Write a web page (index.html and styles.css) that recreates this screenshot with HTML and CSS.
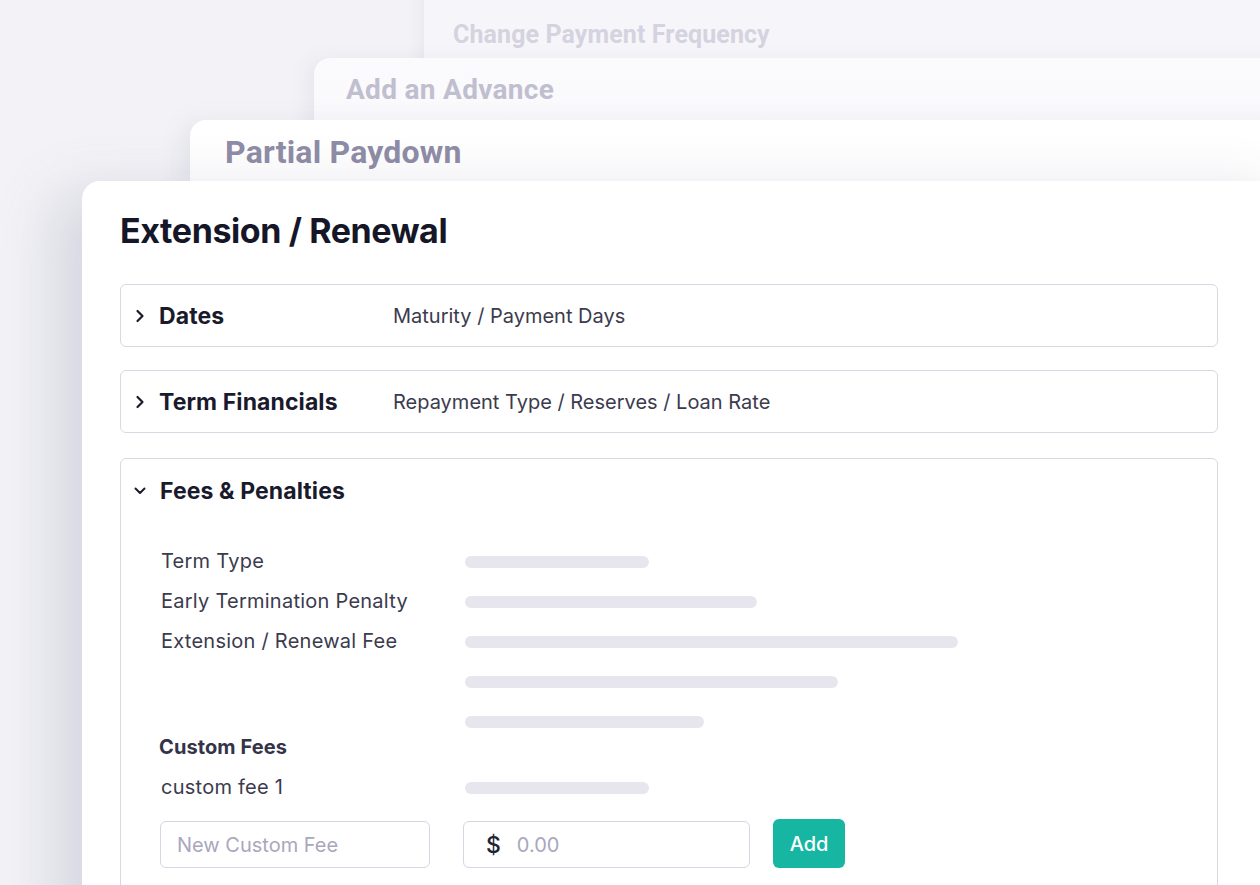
FILE: index.html
```html
<!DOCTYPE html>
<html lang="en">
<head>
<meta charset="utf-8">
<title>Extension / Renewal</title>
<link rel="stylesheet" href="styles.css">
</head>
<body>
<div class="stage">
  <div class="back-card back-1"><span class="back-title">Change Payment Frequency</span></div>
  <div class="back-card back-2"><span class="back-title">Add an Advance</span></div>
  <div class="back-card back-3"><span class="back-title">Partial Paydown</span></div>

  <main class="card">
    <h1 class="title">Extension / Renewal</h1>

    <section class="acc">
      <div class="acc-head">
        <svg class="chev" viewBox="0 0 10 14" width="10" height="14"><path d="M2.5 2 L7.5 7 L2.5 12" fill="none" stroke="#1b1b2c" stroke-width="2.2" stroke-linecap="round" stroke-linejoin="round"/></svg>
        <span class="acc-label">Dates</span>
        <span class="acc-sub">Maturity / Payment Days</span>
      </div>
    </section>

    <section class="acc">
      <div class="acc-head">
        <svg class="chev" viewBox="0 0 10 14" width="10" height="14"><path d="M2.5 2 L7.5 7 L2.5 12" fill="none" stroke="#1b1b2c" stroke-width="2.2" stroke-linecap="round" stroke-linejoin="round"/></svg>
        <span class="acc-label">Term Financials</span>
        <span class="acc-sub">Repayment Type / Reserves / Loan Rate</span>
      </div>
    </section>

    <section class="acc acc-open">
      <div class="acc-head">
        <svg class="chev chev-down" viewBox="0 0 14 10" width="14" height="10"><path d="M2.5 2.5 L7 7 L11.5 2.5" fill="none" stroke="#1b1b2c" stroke-width="2" stroke-linecap="round" stroke-linejoin="round"/></svg>
        <span class="acc-label">Fees &amp; Penalties</span>
      </div>
      <div class="acc-body">
        <div class="row"><span class="row-label">Term Type</span><span class="bar" style="width:184px"></span></div>
        <div class="row"><span class="row-label">Early Termination Penalty</span><span class="bar" style="width:292px"></span></div>
        <div class="row"><span class="row-label">Extension / Renewal Fee</span><span class="bar" style="width:493px"></span></div>
        <div class="row"><span class="row-label"></span><span class="bar" style="width:373px"></span></div>
        <div class="row"><span class="row-label"></span><span class="bar" style="width:239px"></span></div>
        <h2 class="sub-head">Custom Fees</h2>
        <div class="row row-custom"><span class="row-label">custom fee 1</span><span class="bar" style="width:184px"></span></div>
        <div class="form">
          <div class="input input-name"><span class="placeholder">New Custom Fee</span></div>
          <div class="input input-amount"><span class="dollar">$</span><span class="placeholder">0.00</span></div>
          <button class="btn-add" type="button">Add</button>
        </div>
      </div>
    </section>
  </main>
</div>
</body>
</html>
```

FILE: styles.css
```css
* { box-sizing: border-box; }

html, body {
  margin: 0;
  padding: 0;
  width: 1260px;
  height: 885px;
  overflow: hidden;
  background: #f3f3f7;
  font-family: Roboto, "Liberation Sans", sans-serif;
}

.stage {
  position: relative;
  width: 1260px;
  height: 885px;
  overflow: hidden;
}

.back-card {
  position: absolute;
  right: -40px;
  height: 140px;
  border-radius: 16px;
}

.back-title {
  display: block;
  font-weight: 700;
  white-space: nowrap;
}

.back-1 {
  left: 424px;
  top: -20px;
  background: #f6f6fa;
  box-shadow: -6px 0 14px rgba(90, 90, 130, 0.06);
  border-radius: 0;
  padding: 41px 0 0 29px;
}
.back-1 .back-title {
  font-size: 25px;
  line-height: 28px;
  color: #d4d3df;
  letter-spacing: 0.1px;
}

.back-2 {
  left: 314px;
  top: 58px;
  background: linear-gradient(#fbfafd, #f8f7fb);
  box-shadow: -8px 0 18px rgba(90, 90, 130, 0.07);
  padding: 15px 0 0 32px;
}
.back-2 .back-title {
  font-size: 28px;
  line-height: 34px;
  color: #c0bfcf;
  letter-spacing: 0.3px;
}

.back-3 {
  left: 190px;
  top: 120px;
  background: linear-gradient(#ffffff 40%, #f7f6fa);
  box-shadow: -10px 0 22px rgba(90, 90, 130, 0.08);
  padding: 13px 0 0 35px;
}
.back-3 .back-title {
  font-size: 32px;
  line-height: 38px;
  color: #8f8da6;
  letter-spacing: 0.2px;
}

.card {
  position: relative;
  margin: 181px 0 0 82px;
  width: 1220px;
  height: 760px;
  background: #ffffff;
  border-radius: 18px;
  box-shadow: -30px 10px 60px rgba(70, 70, 110, 0.16);
  padding: 30px 0 0 38px;
  display: flex;
  flex-direction: column;
  font-family: Inter, Roboto, "Liberation Sans", sans-serif;
}

.title {
  margin: 0 0 33px;
  font-size: 34px;
  line-height: 40px;
  font-weight: 700;
  color: #161629;
  letter-spacing: -0.4px;
}

.acc {
  width: 1098px;
  border: 1.5px solid #d9d8e3;
  border-radius: 6px;
  margin-bottom: 23px;
}
.acc:nth-of-type(2) { margin-bottom: 25px; }

.acc-head {
  height: 61px;
  display: flex;
  align-items: center;
  padding-left: 14px;
}

.chev { flex: none; width: 10px; margin-right: 14px; }
.chev-down { width: 14px; margin-left: -2px; margin-right: 13px; }

.acc-label {
  width: 234px;
  flex: none;
  font-size: 23px;
  font-weight: 700;
  color: #1a1a2d;
  letter-spacing: 0.1px;
}

.acc-sub {
  font-size: 20px;
  color: #3b3b4d;
}

.acc-open .acc-head { height: 63px; }

.acc-body {
  padding: 27px 0 40px 40px;
  display: flex;
  flex-direction: column;
}

.row {
  display: flex;
  align-items: center;
  height: 24px;
  margin-bottom: 16px;
}

.row-label {
  width: 304px;
  flex: none;
  font-size: 20px;
  line-height: 24px;
  color: #3b3b4d;
  letter-spacing: 0.25px;
}

.bar {
  display: block;
  height: 12px;
  border-radius: 6px;
  background: #e7e6ee;
  margin-top: 2px;
}

.sub-head {
  margin: -14px 0 0 -2px;
  font-size: 20px;
  line-height: 24px;
  font-weight: 700;
  color: #33334a;
  letter-spacing: 0.1px;
}

.row-custom { margin-top: 16px; margin-bottom: 20px; }

.form {
  display: flex;
  align-items: flex-end;
  margin-left: -1px;
}

.input {
  height: 47px;
  border: 1.5px solid #d6d5e1;
  border-radius: 6px;
  display: flex;
  align-items: center;
  padding-left: 16px;
  background: #fff;
}

.input-name { width: 270px; margin-right: 33px; }
.input-amount { width: 287px; margin-right: 23px; padding-left: 22px; }

.placeholder {
  font-size: 20px;
  color: #a9a7be;
}

.dollar {
  font-size: 23px;
  font-weight: 500;
  color: #232334;
  margin-right: 16px;
}

.btn-add {
  width: 72px;
  height: 49px;
  border: none;
  border-radius: 6px;
  background: #16b6a3;
  color: #ffffff;
  font-family: Inter, Roboto, "Liberation Sans", sans-serif;
  font-size: 20px;
  font-weight: 500;
  padding: 0;
}
```
